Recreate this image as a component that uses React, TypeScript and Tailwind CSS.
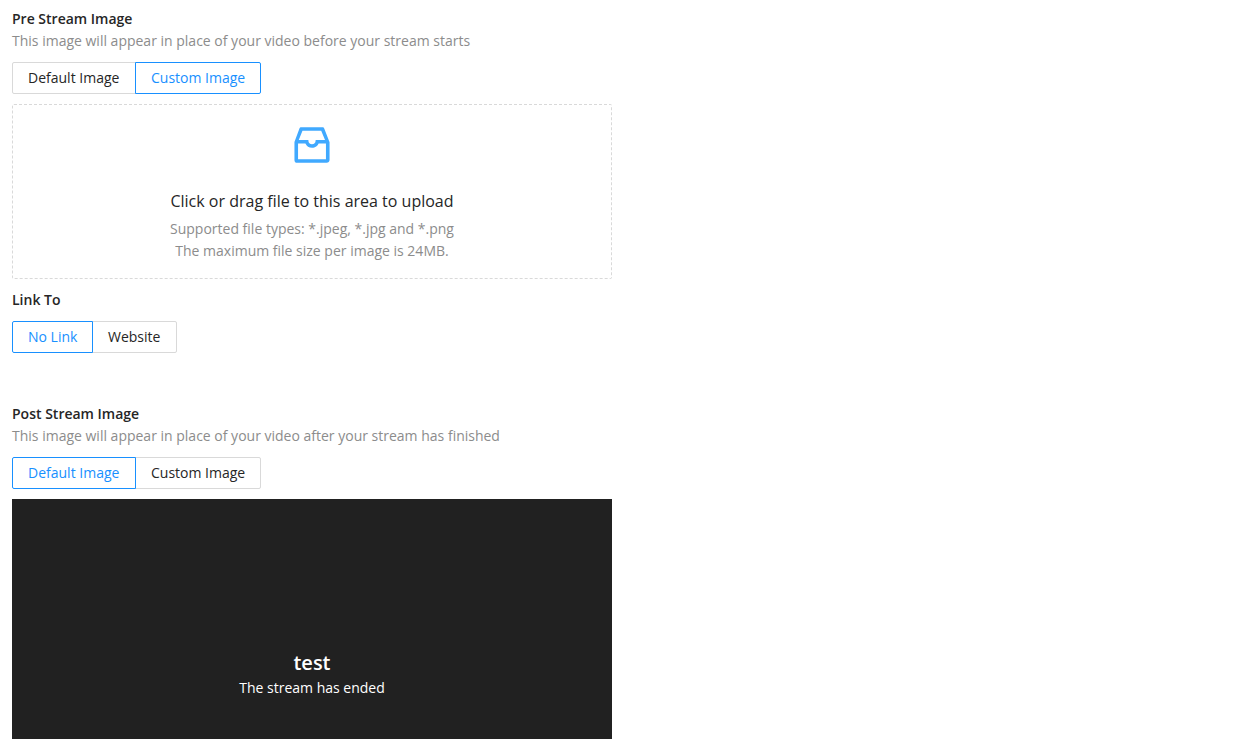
import React from "react";

type ToggleOption = {
  label: string;
  width: string;
};

type ToggleProps = {
  options: ToggleOption[];
  active: number;
};

const imageOptions: ToggleOption[] = [
  { label: "Default Image", width: "w-[124px]" },
  { label: "Custom Image", width: "w-[126px]" },
];

const linkOptions: ToggleOption[] = [
  { label: "No Link", width: "w-[81px]" },
  { label: "Website", width: "w-[85px]" },
];

function ToggleGroup({ options, active }: ToggleProps) {
  return (
    <div className="flex h-8">
      {options.map((option, i) => (
        <div
          key={option.label}
          className={
            "h-8 pl-[15px] flex items-center text-sm border " +
            option.width +
            " " +
            (i === 0 ? "rounded-l-[2px] " : "-ml-px rounded-r-[2px] ") +
            (i === active
              ? "border-[#1890ff] text-[#1890ff] relative"
              : "border-[#d9d9d9] text-[#262626]")
          }
        >
          {option.label}
        </div>
      ))}
    </div>
  );
}

function InboxIcon() {
  return (
    <svg viewBox="0 0 1024 1024" className="w-12 h-12" fill="#40a9ff">
      <path d="M885.2 446.3l-.2-.8-112.2-285.1c-5-16.1-19.9-27.2-36.8-27.2H281.2c-17 0-32.1 11.3-36.9 27.6L139.4 443l-.3.7-.2.8c-1.3 4.9-1.7 9.9-1 14.8-.1 1.6-.2 3.2-.2 4.8V830a60.9 60.9 0 0 0 60.8 60.8h627.2c33.5 0 60.8-27.3 60.9-60.8V464.1c0-1.3 0-2.6-.1-3.7.4-4.9 0-9.6-1.3-14.1zm-295.8-43l-.3 15.7c-.8 44.9-31.8 75.1-77.1 75.1-22.1 0-41.1-7.1-54.8-20.6S436 441.2 435.6 419l-.3-15.7H229.5L309 210h399.2l81.7 193.3H589.4zm-375 76.8h157.3c24.3 57.1 76 90.8 140.4 90.8 33.7 0 65-9.4 90.3-27.2 22.2-15.6 39.5-37.4 50.7-63.6h156.5V814H214.4V480.1z" />
    </svg>
  );
}

export default function App() {
  return (
    <div className="h-[739px] overflow-hidden bg-white px-3 pt-2 font-['Open_Sans',sans-serif] text-sm leading-[22px] text-[#262626]">
      {/* pre stream */}
      <div className="font-semibold">Pre Stream Image</div>
      <div className="text-[#8c8c8c] mb-2.5">This image will appear in place of your video before your stream starts</div>
      <ToggleGroup options={imageOptions} active={1} />

      <div className="mt-2.5 w-[600px] h-[175px] border border-dashed border-[#d9d9d9] rounded-[2px] flex flex-col items-center pt-4">
        <InboxIcon />
        <div className="mt-5 text-base leading-6 text-[#262626]">Click or drag file to this area to upload</div>
        <div className="mt-[5px] text-[#8c8c8c]">Supported file types: *.jpeg, *.jpg and *.png</div>
        <div className="text-[#8c8c8c]">The maximum file size per image is 24MB.</div>
      </div>

      <div className="mt-2.5 font-semibold mb-2.5">Link To</div>
      <ToggleGroup options={linkOptions} active={0} />

      {/* post stream */}
      <div className="mt-[50px] font-semibold">Post Stream Image</div>
      <div className="text-[#8c8c8c] mb-2.5">This image will appear in place of your video after your stream has finished</div>
      <ToggleGroup options={imageOptions} active={0} />

      <div className="mt-2.5 w-[600px] h-[350px] bg-[#212121] text-white flex flex-col items-center justify-center">
        <div className="text-xl leading-7 font-semibold">test</div>
        <div className="text-sm leading-[22px]">The stream has ended</div>
      </div>
    </div>
  );
}
